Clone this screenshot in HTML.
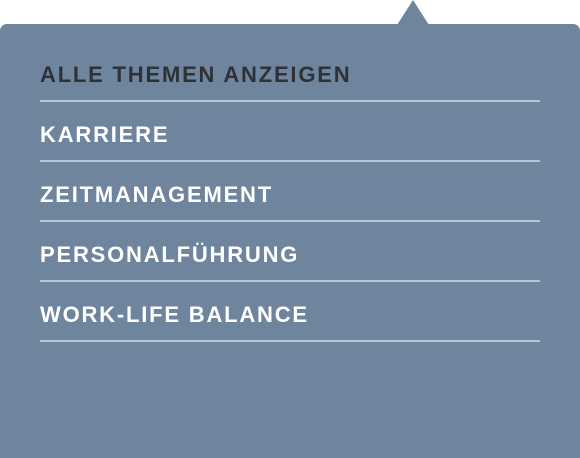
<!DOCTYPE html>
<html><head><style>
body{margin:0;width:580px;height:458px;background:#fff;position:relative;overflow:hidden;font-family:"Liberation Sans",sans-serif}
.box{position:absolute;left:0;top:24px;width:580px;height:434px;background:#6f849d;border-radius:7px 7px 0 0}
.tri{position:absolute;left:397px;top:0;width:0;height:0;border-left:16px solid transparent;border-right:16px solid transparent;border-bottom:25px solid #6f849d}
.item{position:absolute;left:40px;width:520px;height:22px;font-weight:bold;font-size:22px;letter-spacing:1.8px;color:#fff;line-height:22px}
.line{position:absolute;left:40px;width:500px;height:2px;background:#b9c5d6}
</style></head><body>
<div class="tri"></div><div class="box"></div>
<div class="item" style="top:64px;color:#2e3237">ALLE THEMEN ANZEIGEN</div><div class="line" style="top:100px"></div>
<div class="item" style="top:124px">KARRIERE</div><div class="line" style="top:160px"></div>
<div class="item" style="top:184px">ZEITMANAGEMENT</div><div class="line" style="top:220px"></div>
<div class="item" style="top:244px">PERSONALFÜHRUNG</div><div class="line" style="top:280px"></div>
<div class="item" style="top:304px">WORK-LIFE BALANCE</div><div class="line" style="top:340px"></div>
</body></html>
